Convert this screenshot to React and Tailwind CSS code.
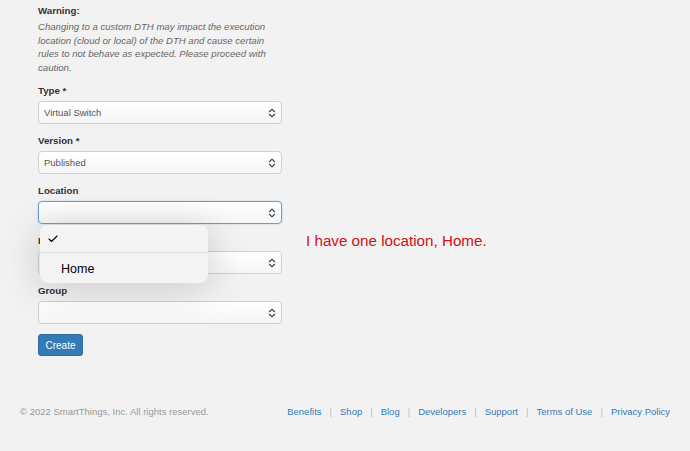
import { Check } from 'lucide-react';

const font = { fontFamily: '"Liberation Sans", Arial, sans-serif' };

// bootstrap-ish up/down chevron used by the selects
const Caret = () => (
  <svg width="8" height="10" viewBox="0 0 8 10" className="absolute right-[5px] top-1/2 -translate-y-1/2">
    <path d="M1.2 4 L4 1.2 L6.8 4" fill="none" stroke="#333" strokeWidth="1.1" />
    <path d="M1.2 6 L4 8.8 L6.8 6" fill="none" stroke="#333" strokeWidth="1.1" />
  </svg>
);

const Select = ({ value = '', focused = false, children }) => (
  <div
    className={`relative h-[23px] rounded-[4px] border bg-gradient-to-b from-white to-[#f6f6f6] ${
      focused ? 'border-[#6b9dd1] shadow-[0_0_2px_rgba(102,175,233,0.5)]' : 'border-[#cfcfcf]'
    }`}
  >
    <span className="absolute left-[5px] top-1/2 -translate-y-1/2 text-[9.5px] text-[#555]">{value}</span>
    <Caret />
    {children}
  </div>
);

const Field = ({ label, value, focused, children }) => (
  <div className="mb-[10px]">
    <div className="text-[9.7px] leading-[13px] font-bold text-[#333] mb-[4px]">{label}</div>
    <Select value={value} focused={focused}>
      {children}
    </Select>
  </div>
);

const links = ['Benefits', 'Shop', 'Blog', 'Developers', 'Support', 'Terms of Use', 'Privacy Policy'];

export default function App() {
  return (
    <div className="w-[690px] h-[451px] bg-[#f2f2f2] overflow-hidden" style={font}>
      <div className="flex">
        {/* form column */}
        <div className="ml-[38px] w-[244px] pt-[4px]">
          <div className="text-[9.7px] leading-[13px] font-bold text-[#333]">Warning:</div>
          <p className="mt-[3px] text-[9.6px] leading-[13.6px] italic text-[#666]">
            Changing to a custom DTH may impact the execution location (cloud or local) of the DTH and cause certain
            rules to not behave as expected. Please proceed with caution.
          </p>

          <div className="mt-[10px]">
            <Field label="Type *" value="Virtual Switch" />
            <Field label="Version *" value="Published" />
            <Field label="Location" focused>
              {/* open native dropdown */}
              <div className="absolute left-[1px] top-[23px] w-[168px] rounded-[8px] bg-[#f4f4f4] shadow-[0_4px_40px_rgba(0,0,0,0.18)] z-10">
                <div className="h-[28px] flex items-center pl-[7px] border-b border-[#dcdcdc]">
                  <Check className="w-[12px] h-[12px] text-black" strokeWidth={2.2} />
                </div>
                <div className="h-[30px] flex items-center pl-[21px] pt-[2px] text-[12.5px] text-black">Home</div>
              </div>
            </Field>
            <Field label="Hub" />
            <Field label="Group" />
          </div>

          <button className="block w-[45px] h-[22px] rounded-[3px] bg-[#337ab7] border border-[#2e6da4] text-white text-[10px]">
            Create
          </button>
        </div>

        {/* annotation */}
        <div className="ml-[24px] mt-[232px] text-[15.2px] leading-[18px] text-[#d0101a]">I have one location, Home.</div>
      </div>

      <footer className="mt-[50px] mx-[20px] flex justify-between items-center text-[9.5px] leading-[12px]">
        <span className="text-[#999]">© 2022 SmartThings, Inc. All rights reserved.</span>
        <nav className="flex items-center">
          {links.map((l, i) => (
            <span key={l} className="flex items-center">
              {i > 0 && <span className="mx-[8px] text-[#bbb]">|</span>}
              <a className="text-[#337ab7]">{l}</a>
            </span>
          ))}
        </nav>
      </footer>
    </div>
  );
}
